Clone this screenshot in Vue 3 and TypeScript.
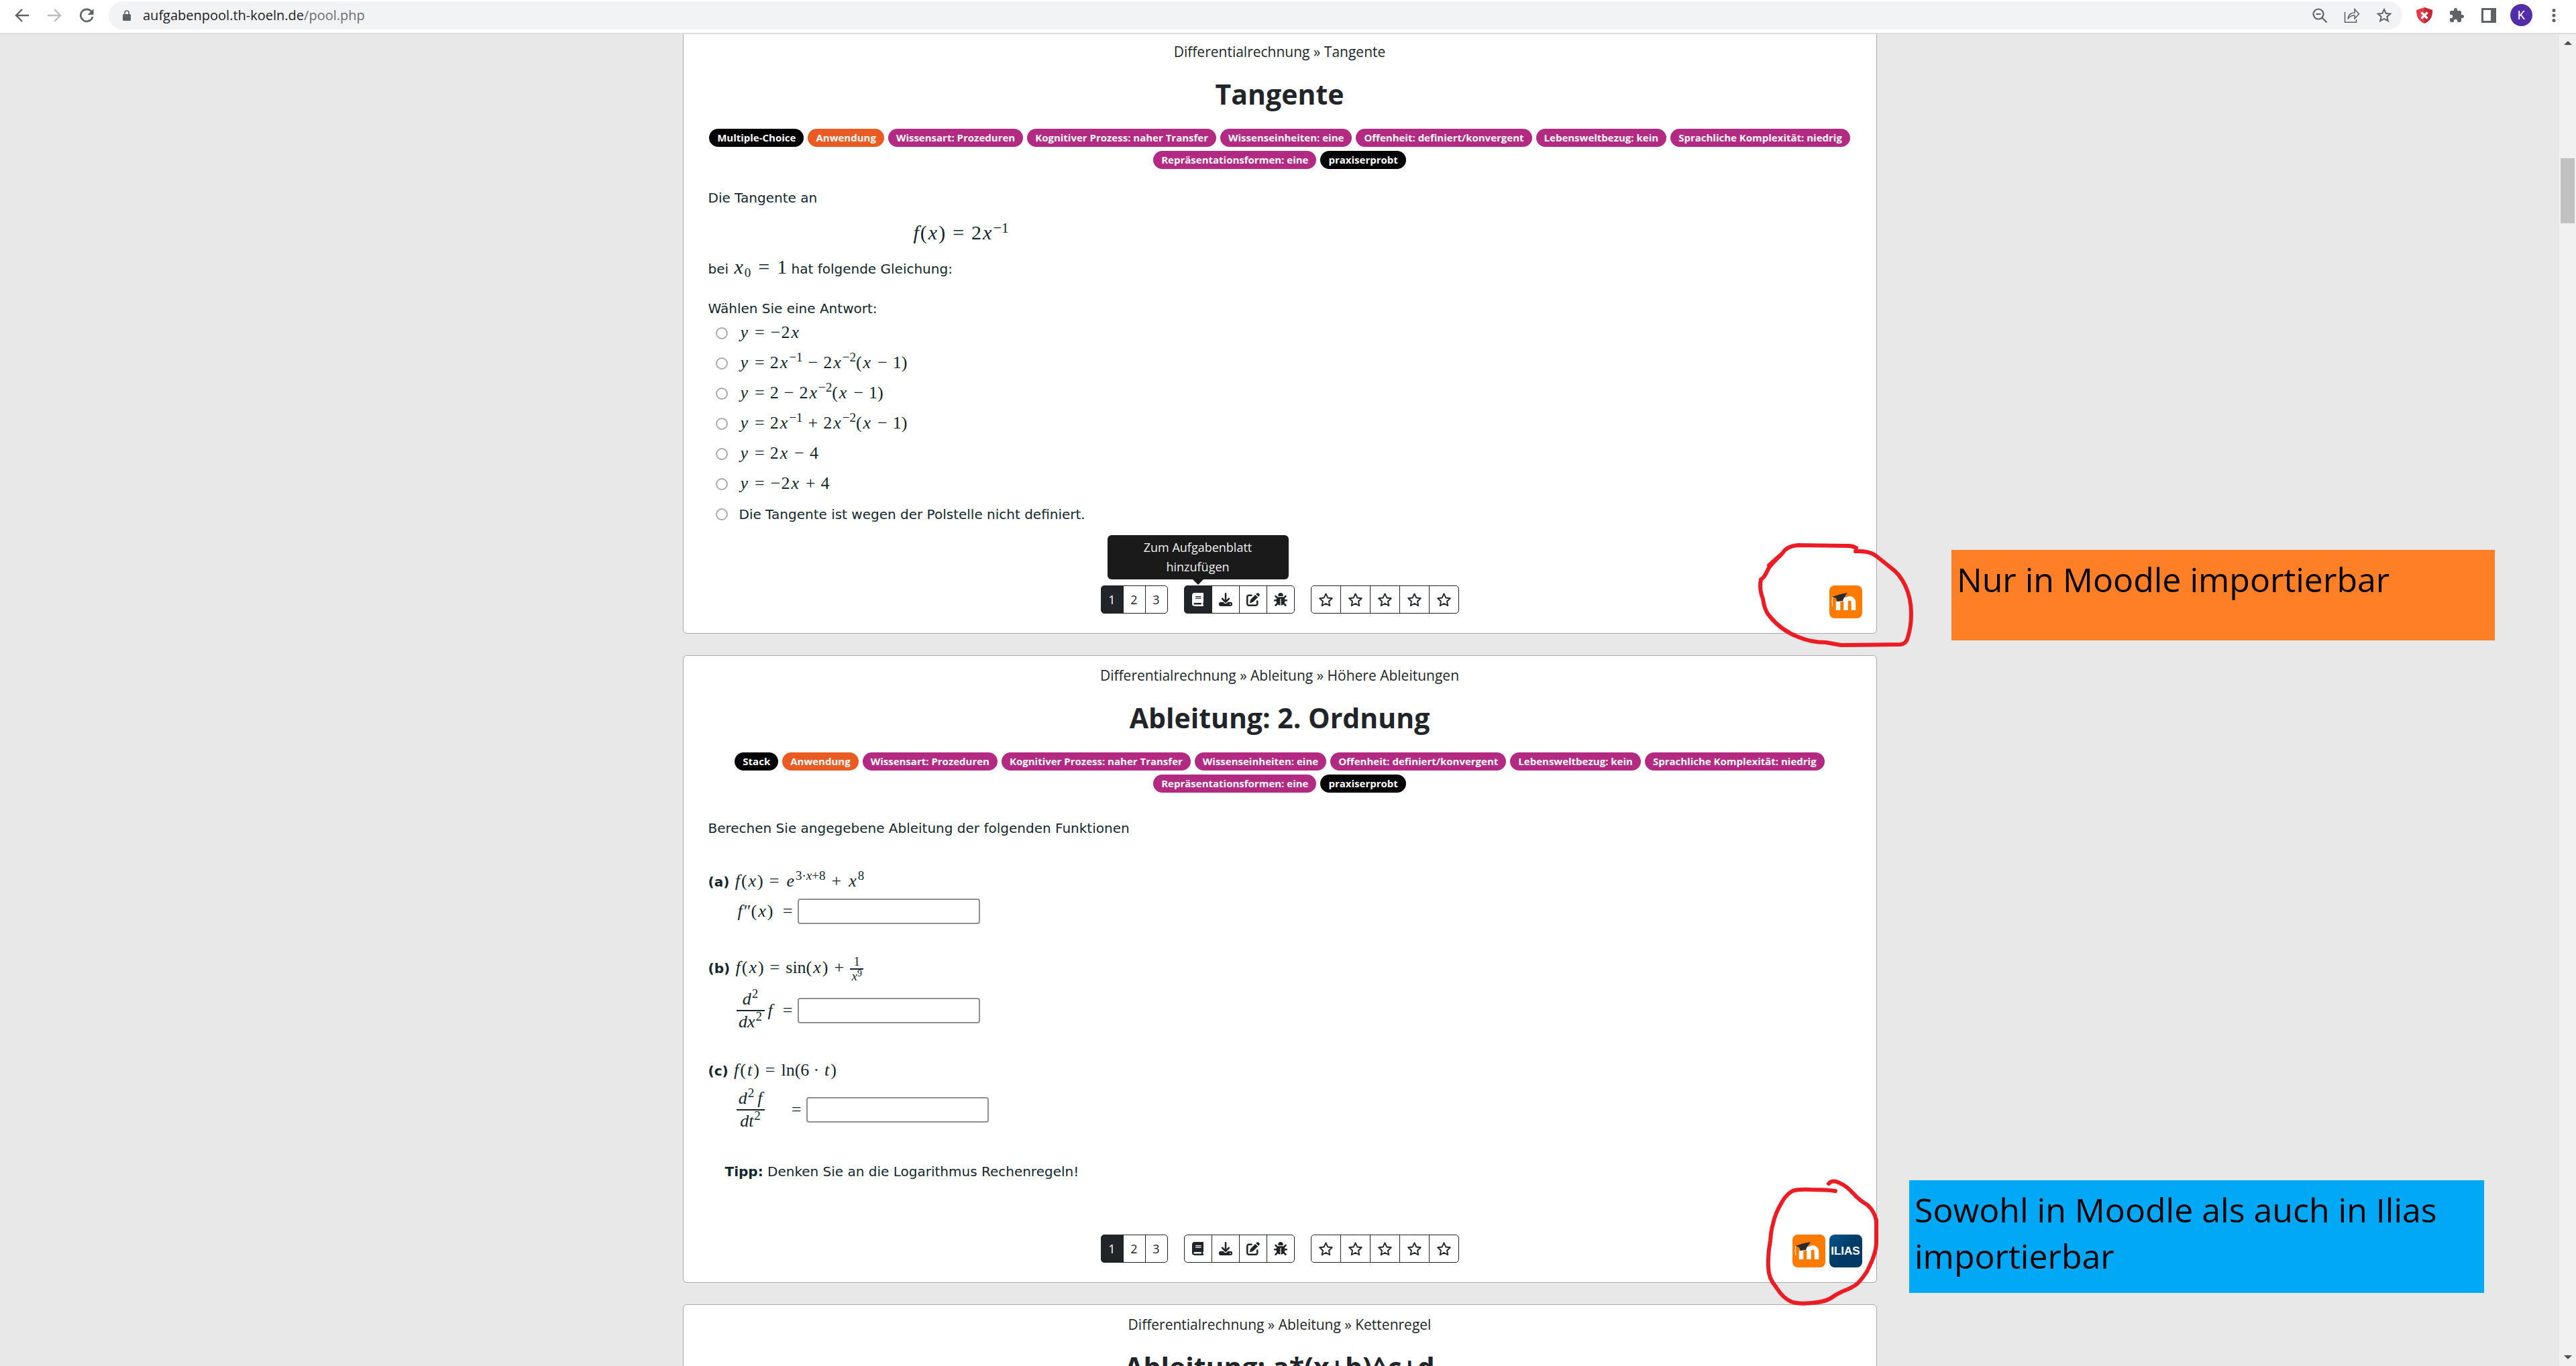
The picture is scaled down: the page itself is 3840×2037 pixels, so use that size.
<script setup lang="ts">
interface Token {
  kind: 'v' | 'n' | 'op' | 'neg' | 'sup'
  text: string
}

interface Tag {
  label: string
  tone: 'dark' | 'orange' | 'pink'
}

const v = (text: string): Token => ({ kind: 'v', text })
const n = (text: string): Token => ({ kind: 'n', text })
const op = (text: string): Token => ({ kind: 'op', text })
const neg: Token = { kind: 'neg', text: '−' }
const sup = (text: string): Token => ({ kind: 'sup', text })

const xMinusOne: Token[] = [n('('), v('x'), op('−'), n('1)')]

const answers: Token[][] = [
  [v('y'), op('='), neg, n('2'), v('x')],
  [v('y'), op('='), n('2'), v('x'), sup('−1'), op('−'), n('2'), v('x'), sup('−2'), ...xMinusOne],
  [v('y'), op('='), n('2'), op('−'), n('2'), v('x'), sup('−2'), ...xMinusOne],
  [v('y'), op('='), n('2'), v('x'), sup('−1'), op('+'), n('2'), v('x'), sup('−2'), ...xMinusOne],
  [v('y'), op('='), n('2'), v('x'), op('−'), n('4')],
  [v('y'), op('='), neg, n('2'), v('x'), op('+'), n('4')],
]

const commonTags: Tag[] = [
  { label: 'Anwendung', tone: 'orange' },
  { label: 'Wissensart: Prozeduren', tone: 'pink' },
  { label: 'Kognitiver Prozess: naher Transfer', tone: 'pink' },
  { label: 'Wissenseinheiten: eine', tone: 'pink' },
  { label: 'Offenheit: definiert/konvergent', tone: 'pink' },
  { label: 'Lebensweltbezug: kein', tone: 'pink' },
  { label: 'Sprachliche Komplexität: niedrig', tone: 'pink' },
  { label: 'Repräsentationsformen: eine', tone: 'pink' },
  { label: 'praxiserprobt', tone: 'dark' },
]

interface Task {
  id: string
  path: string
  title: string
  tags: Tag[]
  ilias: boolean
  tooltip: boolean
}

const tasks: Task[] = [
  {
    id: 'tangente',
    path: 'Differentialrechnung » Tangente',
    title: 'Tangente',
    tags: [{ label: 'Multiple-Choice', tone: 'dark' }, ...commonTags],
    ilias: false,
    tooltip: true,
  },
  {
    id: 'ordnung',
    path: 'Differentialrechnung » Ableitung » Höhere Ableitungen',
    title: 'Ableitung: 2. Ordnung',
    tags: [{ label: 'Stack', tone: 'dark' }, ...commonTags],
    ilias: true,
    tooltip: false,
  },
]

const actions = [
  {
    name: 'Zum Aufgabenblatt hinzufügen',
    box: '0 0 448 512',
    d: 'M96 0C43 0 0 43 0 96V416c0 53 43 96 96 96H384h32c17.7 0 32-14.3 32-32s-14.3-32-32-32V384c17.7 0 32-14.3 32-32V32c0-17.7-14.3-32-32-32H384 96zm0 384H352v64H96c-17.7 0-32-14.3-32-32s14.3-32 32-32zm32-240c0-8.8 7.2-16 16-16H336c8.8 0 16 7.2 16 16s-7.2 16-16 16H144c-8.8 0-16-7.2-16-16zm16 48H336c8.8 0 16 7.2 16 16s-7.2 16-16 16H144c-8.8 0-16-7.2-16-16s7.2-16 16-16z',
  },
  {
    name: 'Herunterladen',
    box: '0 0 512 512',
    d: 'M288 32c0-17.7-14.3-32-32-32s-32 14.3-32 32V274.7l-73.4-73.4c-12.5-12.5-32.8-12.5-45.3 0s-12.5 32.8 0 45.3l128 128c12.5 12.5 32.8 12.5 45.3 0l128-128c12.5-12.5 12.5-32.8 0-45.3s-32.8-12.5-45.3 0L288 274.7V32zM64 352c-35.3 0-64 28.7-64 64v32c0 35.3 28.7 64 64 64H448c35.3 0 64-28.7 64-64V416c0-35.3-28.7-64-64-64H346.5l-45.3 45.3c-25 25-65.5 25-90.5 0L165.5 352H64zm368 56a24 24 0 1 1 0 48 24 24 0 1 1 0-48z',
  },
  {
    name: 'Bearbeiten',
    box: '0 0 512 512',
    d: 'M471.6 21.7c-21.9-21.9-57.3-21.9-79.2 0L362.3 51.7l97.9 97.9 30.1-30.1c21.9-21.9 21.9-57.3 0-79.2L471.6 21.7zm-299.2 220c-6.1 6.1-10.8 13.6-13.5 21.9l-29.6 88.8c-2.9 8.6-.6 18.1 5.8 24.6s15.9 8.7 24.6 5.8l88.8-29.6c8.2-2.7 15.7-7.4 21.9-13.5L437.7 172.3 339.7 74.3 172.4 241.7zM96 64C43 64 0 107 0 160V416c0 53 43 96 96 96H352c53 0 96-43 96-96V320c0-17.7-14.3-32-32-32s-32 14.3-32 32v96c0 17.7-14.3 32-32 32H96c-17.7 0-32-14.3-32-32V160c0-17.7 14.3-32 32-32h96c17.7 0 32-14.3 32-32s-14.3-32-32-32H96z',
  },
  {
    name: 'Fehler melden',
    box: '0 0 512 512',
    d: 'M256 0c53 0 96 43 96 96v3.6c0 15.7-12.7 28.4-28.4 28.4H188.4c-15.7 0-28.4-12.7-28.4-28.4V96c0-53 43-96 96-96zM41.4 105.4c12.5-12.5 32.8-12.5 45.3 0l64 64c.7 .7 1.3 1.4 1.9 2.1c14.2-7.3 30.4-11.4 47.5-11.4H312c17.1 0 33.2 4.1 47.5 11.4c.6-.7 1.2-1.4 1.9-2.1l64-64c12.5-12.5 32.8-12.5 45.3 0s12.5 32.8 0 45.3l-64 64c-.7 .7-1.4 1.3-2.1 1.9c6.2 12 10.1 25.3 11.1 39.5H480c17.7 0 32 14.3 32 32s-14.3 32-32 32H416c0 24.6-5.5 47.8-15.4 68.6c2.2 1.3 4.2 2.9 6 4.8l64 64c12.5 12.5 12.5 32.8 0 45.3s-32.8 12.5-45.3 0l-63.1-63.1c-24.5 21.8-55.8 36.2-90.3 39.6V240c0-8.8-7.2-16-16-16s-16 7.2-16 16V479.2c-34.5-3.4-65.8-17.8-90.3-39.6L86.6 502.6c-12.5 12.5-32.8 12.5-45.3 0s-12.5-32.8 0-45.3l64-64c1.9-1.9 3.9-3.4 6-4.8C101.5 367.8 96 344.6 96 320H32c-17.7 0-32-14.3-32-32s14.3-32 32-32H96.3c1.1-14.1 5-27.5 11.1-39.5c-.7-.6-1.4-1.2-2.1-1.9l-64-64c-12.5-12.5-12.5-32.8 0-45.3z',
  },
]
</script>

<template>
  <div class="browser">
    <header class="toolbar">
      <nav class="nav">
        <button class="icon-btn" aria-label="Zurück">
          <svg viewBox="0 0 24 24"><path d="M22 12H3M12 3l-9 9 9 9" fill="none" stroke="#5f6368" stroke-width="2.4" /></svg>
        </button>
        <button class="icon-btn" aria-label="Vorwärts">
          <svg viewBox="0 0 24 24"><path d="M2 12h19M12 3l9 9-9 9" fill="none" stroke="#babcbe" stroke-width="2.4" /></svg>
        </button>
        <button class="icon-btn" aria-label="Neu laden">
          <svg viewBox="0 0 24 24"><path d="M19.5 6.5A9 9 0 1 0 21 14" fill="none" stroke="#5f6368" stroke-width="2.6" /><path d="M22.5 2v9h-9z" fill="#5f6368" /></svg>
        </button>
      </nav>
      <div class="address">
        <svg class="lock" viewBox="0 0 12 16"><path d="M3 7V4a3 3 0 0 1 6 0v3" fill="none" stroke="#5f6368" stroke-width="1.6" /><rect y="6" width="12" height="10" rx="1.5" fill="#5f6368" /></svg>
        <span class="url">aufgabenpool.th-koeln.de<span class="rest">/pool.php</span></span>
        <button class="icon-btn" aria-label="Zoom">
          <svg viewBox="0 0 24 24"><g fill="none" stroke="#5f6368" stroke-width="2.2"><circle cx="10" cy="10" r="7.5" /><path d="M15.5 15.5l7 7M6.500 10h7" /></g></svg>
        </button>
        <button class="icon-btn" aria-label="Teilen">
          <svg viewBox="0 0 24 24"><g fill="none" stroke="#5f6368" stroke-width="1.6"><path d="M1.5 7v15.2h17V18" /><path d="M6 17.5c.5-6 4-9.500 10-9.500V2.800l6.500 7-6.500 7V12c-5 0-8 1.500-10 5.500z" /></g></svg>
        </button>
        <button class="icon-btn" aria-label="Lesezeichen">
          <svg viewBox="0 0 24 24"><path d="M12 3l2.700 6 6.500.6-4.900 4.300 1.500 6.400L12 16.900l-5.800 3.400 1.500-6.400-4.900-4.300 6.500-.6z" fill="none" stroke="#5f6368" stroke-width="2" /></svg>
        </button>
      </div>
      <div class="extensions">
        <button class="icon-btn" aria-label="Werbeblocker">
          <svg viewBox="0 0 24 24"><path d="M12 0l12 4c0 10-3 16-12 20C3 20 0 14 0 4z" fill="#e83948" /><path d="M12 0l12 4c0 10-3 16-12 20z" fill="#c62936" /><path d="M7.500 7.500l9 9M16.500 7.500l-9 9" stroke="#fff" stroke-width="3.4" /></svg>
        </button>
        <button class="icon-btn" aria-label="Erweiterungen">
          <svg viewBox="0 0 24 24"><path d="M20.500 11H19V7a2 2 0 0 0-2-2h-4V3.500a2.500 2.500 0 0 0-5 0V5H4a2 2 0 0 0-2 2v3.800h1.500a2.700 2.700 0 0 1 0 5.400H2V20a2 2 0 0 0 2 2h3.800v-1.500a2.700 2.700 0 0 1 5.400 0V22H17a2 2 0 0 0 2-2v-4h1.500a2.500 2.500 0 0 0 0-5z" fill="#5f6368" /></svg>
        </button>
        <button class="icon-btn" aria-label="Seitenleiste">
          <svg viewBox="0 0 24 24"><path d="M1 1h22v22H1zM4 4v16h11V4z" fill="#5f6368" fill-rule="evenodd" /></svg>
        </button>
        <button class="avatar" aria-label="Profil">K</button>
        <button class="icon-btn" aria-label="Menü">
          <svg viewBox="0 0 24 24"><g fill="#5f6368"><circle cx="12" cy="4.500" r="2.500" /><circle cx="12" cy="12" r="2.500" /><circle cx="12" cy="19.500" r="2.500" /></g></svg>
        </button>
      </div>
    </header>

    <div class="viewport">
      <main class="page">
        <article v-for="task in tasks" :key="task.id" class="card">
          <p class="path">{{ task.path }}</p>
          <h2>{{ task.title }}</h2>
          <div class="tags">
            <span v-for="tag in task.tags" :key="tag.label" class="tag" :class="tag.tone">{{ tag.label }}</span>
          </div>

          <div v-if="task.id === 'tangente'" class="body">
            <p class="line">Die Tangente an</p>
            <p class="display math"><i class="v">f</i>(<i class="v">x</i>)<span class="op">=</span>2<i class="v">x</i><sup>−1</sup></p>
            <p class="line bei">bei <span class="math large"><i class="v">x</i><sub>0</sub><span class="op">=</span>1</span> hat folgende Gleichung:</p>
            <fieldset class="answers">
              <legend>Wählen Sie eine Antwort:</legend>
              <label v-for="(answer, i) in answers" :key="i" class="answer">
                <input type="radio" name="antwort" />
                <span class="math"><template v-for="(t, k) in answer" :key="k"><i v-if="t.kind === 'v'" class="v">{{ t.text }}</i><sup v-else-if="t.kind === 'sup'">{{ t.text }}</sup><span v-else :class="t.kind">{{ t.text }}</span></template></span>
              </label>
              <label class="answer">
                <input type="radio" name="antwort" />
                <span>Die Tangente ist wegen der Polstelle nicht definiert.</span>
              </label>
            </fieldset>
          </div>

          <div v-else class="body stack">
            <p class="line">Berechen Sie angegebene Ableitung der folgenden Funktionen</p>
            <p class="part"><b>(a)</b> <span class="math"><i class="v">f</i>(<i class="v">x</i>)<span class="op">=</span><i class="v">e</i><sup>3·<i>x</i>+8</sup><span class="op">+</span><i class="v">x</i><sup>8</sup></span></p>
            <label class="entry">
              <span class="math"><i class="v">f</i><span>″(</span><i class="v">x</i><span>)</span><span class="eq">=</span></span>
              <input type="text" />
            </label>
            <p class="part"><b>(b)</b> <span class="math"><i class="v">f</i>(<i class="v">x</i>)<span class="op">=</span>sin(<i class="v">x</i>)<span class="op">+</span><span class="frac small"><span>1</span><span><i>x</i><sup>9</sup></span></span></span></p>
            <label class="entry tall">
              <span class="math"><span class="frac"><span><i class="v">d</i><sup>2</sup></span><span><i class="v">dx</i><sup>2</sup></span></span><i class="v after">f</i><span class="eq">=</span></span>
              <input type="text" />
            </label>
            <p class="part last"><b>(c)</b> <span class="math"><i class="v">f</i>(<i class="v">t</i>)<span class="op">=</span>ln(6<span class="dot">·</span><i class="v">t</i>)</span></p>
            <label class="entry wide">
              <span class="math"><span class="frac"><span><i class="v">d</i><sup>2</sup><i class="after">f</i></span><span><i class="v">dt</i><sup>2</sup></span></span><span class="eq">=</span></span>
              <input type="text" />
            </label>
            <p class="hint"><b>Tipp:</b> Denken Sie an die Logarithmus Rechenregeln!</p>
          </div>

          <footer class="foot">
            <div class="controls">
              <div class="group">
                <button v-for="p in 3" :key="p" class="btn num" :class="{ active: p === 1 }">{{ p }}</button>
              </div>
              <div class="group">
                <button v-for="(a, i) in actions" :key="a.name" class="btn act" :class="{ active: task.tooltip && i === 0 }" :aria-label="a.name">
                  <svg :viewBox="a.box"><path :d="a.d" fill="currentColor" /></svg>
                  <span v-if="task.tooltip && i === 0" class="tooltip" role="tooltip">Zum Aufgabenblatt hinzufügen</span>
                </button>
              </div>
              <div class="group">
                <button v-for="s in 5" :key="s" class="btn star" :aria-label="`${s} Sterne`">
                  <svg viewBox="0 0 24 24"><path d="M12 2.500l2.900 6.300 6.800.8-5 4.700 1.300 6.800-6-3.400-6 3.400 1.300-6.800-5-4.700 6.800-.8z" fill="none" stroke="currentColor" stroke-width="2" stroke-linejoin="round" /></svg>
                </button>
              </div>
            </div>
            <div class="systems">
              <svg class="logo" viewBox="0 0 49 49" role="img" aria-label="Moodle">
                <rect width="49" height="49" rx="8" fill="#ff7b00" />
                <path d="M13 37V24M24.500 37V25a4.500 4.500 0 0 0-9 -1M24.500 37V25a5.500 5.500 0 0 1 11.500 0v12" fill="none" stroke="#fff" stroke-width="6.500" />
                <path d="M4 17l13-4 10-2-6 9-1 3-8 1-2-5z" fill="#2b2b2b" />
                <path d="M5 17q-2 7 0 14" fill="none" stroke="#fff" stroke-width="1" />
              </svg>
              <span v-if="task.ilias" class="logo ilias">ILIAS</span>
            </div>
          </footer>
        </article>

        <article class="card">
          <p class="path">Differentialrechnung » Ableitung » Kettenregel</p>
          <h2>Ableitung: a*(x+b)^c+d</h2>
        </article>
      </main>

      <aside class="scrollbar">
        <svg viewBox="0 0 12 6"><path d="M0 6l6-6 6 6z" fill="#505050" /></svg>
        <div class="thumb"></div>
        <svg class="down" viewBox="0 0 12 6"><path d="M0 0l6 6 6-6z" fill="#505050" /></svg>
      </aside>
    </div>

    <svg class="ink" viewBox="0 0 3840 2037">
      <g fill="none" stroke="#ed1c24" stroke-width="6" stroke-linecap="round" stroke-linejoin="round">
        <path d="M2767 817Q2762 814 2755 814L2680 813Q2668 814 2661 820Q2652 832 2637 843L2656 826Q2640 842 2636 848Q2630 862 2625 864Q2622 878 2628 893Q2630 910 2638 919Q2655 940 2681 950Q2700 958 2722 958L2744 962L2833 961Q2842 960 2844 950Q2849 935 2849 915Q2849 892 2840 873Q2832 856 2818 846L2798 830Q2788 821 2766 822" />
        <path d="M2736 1776Q2722 1774 2700 1774Q2680 1773 2672 1776Q2662 1782 2656 1793Q2646 1810 2643 1825Q2640 1835 2639 1850Q2635 1870 2636 1890Q2636 1906 2648 1920Q2658 1936 2670 1941Q2680 1945 2700 1943Q2718 1942 2729 1936Q2737 1930 2746 1926Q2762 1920 2769 1914Q2782 1900 2786 1890Q2796 1870 2797 1855L2797 1820Q2794 1806 2784 1797Q2772 1790 2763 1780Q2752 1768 2744 1765Q2732 1758 2726 1765" />
      </g>
    </svg>
    <p class="note moodle">Nur in Moodle importierbar</p>
    <p class="note both">Sowohl in Moodle als auch in Ilias importierbar</p>
  </div>
</template>

<style>
body {
  margin: 0;
}
</style>

<style scoped>
.browser {
  position: relative;
  display: flex;
  flex-direction: column;
  height: 100vh;
  overflow: hidden;
  background: #e8e8e8;
  color: #212529;
  font-family: "Open Sans", "Noto Sans", sans-serif;
  font-size: 20px;
}
p, h2 {
  margin: 0;
}
button {
  padding: 0;
  border: 0;
  background: none;
  font: inherit;
  color: inherit;
}
svg {
  display: block;
}
.toolbar {
  display: flex;
  align-items: center;
  flex: none;
  height: 43px;
  padding: 1px 21px 5px;
  border-bottom: 2px solid #dcdcdc;
  background: #fff;
}
.nav {
  display: flex;
  gap: 24px;
  margin-right: 21px;
}
.icon-btn {
  width: 24px;
  height: 24px;
}
.address {
  display: flex;
  align-items: center;
  flex: 1;
  gap: 24px;
  height: 42px;
  padding: 0 15px 0 21px;
  border-radius: 21px;
  background: #f1f3f4;
}
.lock {
  width: 12px;
  height: 16px;
}
.url {
  flex: 1;
  margin-left: -6px;
  color: #202124;
}
.rest {
  color: #6a6e73;
}
.extensions {
  display: flex;
  align-items: center;
  gap: 24px;
  margin-left: 21px;
}
.avatar {
  width: 33px;
  height: 33px;
  margin: 0 -4px;
  border-radius: 50%;
  background: #512da8;
  color: #fff;
  font-family: Roboto, sans-serif;
  font-size: 18px;
}
.viewport {
  display: flex;
  flex: 1;
  min-height: 0;
}
.page {
  display: flex;
  flex: 1;
  flex-direction: column;
  align-items: center;
  gap: 32px;
  margin-top: -4px;
  overflow: hidden;
  clip-path: inset(4px 0 0 0);
}
.card {
  box-sizing: border-box;
  flex: none;
  width: 100%;
  max-width: 1780px;
  padding-top: 13px;
  border: 1px solid #aaa;
  border-radius: 6px;
  background: #fff;
}
.path {
  font-size: 21px;
  line-height: 32px;
  text-align: center;
}
h2 {
  margin: 21px 0 26px;
  font-size: 41px;
  font-weight: 700;
  line-height: 52px;
  text-align: center;
}
.tags {
  display: flex;
  flex-wrap: wrap;
  justify-content: center;
  gap: 6px;
  padding: 0 30px;
}
.tag {
  padding: 0 12px;
  border-radius: 14px;
  color: #fff;
  font-size: 15px;
  font-weight: 700;
  line-height: 27px;
}
.dark {
  background: #000;
}
.orange {
  background: #e95b22;
}
.pink {
  background: #b32a82;
}
.body {
  padding: 28px 37px 84px;
  color: #12272c;
  font-family: "DejaVu Sans", sans-serif;
  font-size: 20px;
}
.line {
  line-height: 30px;
}
.bei {
  margin-top: 18px;
  line-height: 32px;
}
.math {
  font-family: "Liberation Serif", serif;
  font-size: 26px;
  line-height: 0;
}
.large,
.display {
  font-size: 30px;
}
.display {
  margin: 17px 0 0 304px;
  line-height: 40px;
}
.v {
  margin: 0 2px;
}
.op {
  margin: 0 8px;
}
.large .op,
.display .op {
  margin: 0 11px;
}
.part .op {
  margin: 0 9px;
}
.dot {
  margin: 0 6px;
}
.neg {
  margin: 0 1px;
}
sup,
sub {
  font-size: 19px;
  line-height: 0;
}
sup {
  vertical-align: 10px;
}
sub {
  vertical-align: -5px;
}
.display sup {
  font-size: 22px;
}
.answers {
  margin: 0;
  padding: 29px 0 0;
  border: 0;
}
legend {
  float: left;
  width: 100%;
  padding: 0;
  line-height: 28px;
}
.answer {
  clear: both;
  display: flex;
  align-items: center;
  gap: 17px;
  height: 45px;
  padding-left: 11px;
}
.answer .math {
  height: 34px;
  line-height: 32px;
}
.answer input {
  appearance: none;
  width: 18px;
  height: 18px;
  margin: 0;
  border: 2px solid #aaa;
  border-radius: 50%;
}
.stack {
  padding: 38px 37px 79px;
}
.part {
  margin-top: 46px;
  line-height: 40px;
}
.line + .part {
  margin-top: 45px;
}
.last {
  margin-top: 38px;
}
.entry {
  display: flex;
  align-items: center;
  height: 38px;
  margin: 5px 0 0 42px;
}
.entry .math {
  box-sizing: border-box;
  width: 91px;
  padding-right: 7px;
  display: flex;
  align-items: center;
}
.eq {
  margin-left: auto;
}
.entry input {
  box-sizing: border-box;
  width: 272px;
  height: 38px;
  border: 2px solid #8f8f8f;
  border-radius: 4px;
  background: #fff;
}
.tall,
.wide {
  height: 64px;
}
.tall {
  margin-top: 11px;
}
.wide {
  margin-top: 6px;
}
.wide .math {
  width: 104px;
}
.frac {
  display: inline-flex;
  flex-direction: column;
  align-items: center;
  min-width: 42px;
  line-height: 32px;
}
.frac > span:first-child {
  align-self: stretch;
  border-bottom: 2px solid #12272c;
  text-align: center;
}
.frac .v {
  margin: 0 1px 0 0;
}
.after,
.v.after {
  margin-left: 5px;
}
.small {
  min-width: 20px;
  margin: -6px 0;
  font-size: 19px;
  line-height: 20px;
  vertical-align: middle;
}
.small sup {
  font-size: 14px;
  vertical-align: 6px;
}
.hint {
  margin: 45px 0 0 25px;
  line-height: 30px;
}
.foot {
  display: grid;
  grid-template-columns: 1fr auto 1fr;
  align-items: start;
  padding: 0 21px 22px;
}
.controls {
  display: flex;
  grid-column: 2;
  gap: 24px;
}
.group {
  display: flex;
}
.btn {
  position: relative;
  display: flex;
  align-items: center;
  justify-content: center;
  box-sizing: border-box;
  height: 42px;
  margin-left: -1px;
  border: 1px solid #212529;
  font-size: 18px;
}
.btn:first-child {
  margin-left: 0;
  border-radius: 5px 0 0 5px;
}
.btn:last-child {
  border-radius: 0 5px 5px 0;
}
.num {
  width: 34px;
}
.act {
  width: 42px;
}
.star {
  width: 45px;
}
.act svg {
  height: 20px;
}
.star svg {
  width: 23px;
}
.active {
  background: #212529;
  color: #fff;
}
.tooltip {
  position: absolute;
  bottom: 50px;
  left: 50%;
  box-sizing: border-box;
  width: 270px;
  margin-left: -135px;
  padding: 4px 40px;
  border-radius: 6px;
  background: #1a1a1a;
  color: #f0f0f0;
  line-height: 29px;
}
.tooltip::after {
  content: "";
  position: absolute;
  top: 100%;
  left: 50%;
  margin-left: -8px;
  border: 8px solid transparent;
  border-top-color: #1a1a1a;
  border-bottom: 0;
}
.systems {
  display: flex;
  grid-column: 3;
  justify-content: flex-end;
  gap: 6px;
}
.logo {
  width: 49px;
  height: 49px;
}
.ilias {
  border-radius: 8px;
  background: linear-gradient(135deg, #00568c, #003a66 50%);
  color: #fff;
  font-family: "Liberation Sans", sans-serif;
  font-size: 17px;
  font-weight: 700;
  line-height: 50px;
  text-align: center;
}
.scrollbar {
  display: flex;
  flex-direction: column;
  align-items: center;
  box-sizing: border-box;
  width: 25px;
  padding: 10px 2px;
  background: #f1f1f1;
}
.scrollbar svg {
  width: 12px;
  height: 6px;
}
.thumb {
  width: 21px;
  height: 97px;
  margin-top: 169px;
  background: #c1c1c1;
}
.down {
  margin-top: auto;
}
.ink {
  position: absolute;
  inset: 0;
  width: 100%;
  pointer-events: none;
}
.note {
  position: absolute;
  box-sizing: border-box;
  padding: 10px 8px;
  color: #000;
  font-size: 50px;
  line-height: 69px;
}
.moodle {
  top: 820px;
  left: 2909px;
  width: 810px;
  height: 135px;
  background: #ff7f27;
}
.both {
  top: 1760px;
  left: 2846px;
  width: 857px;
  height: 168px;
  background: #00a8f5;
}
</style>
